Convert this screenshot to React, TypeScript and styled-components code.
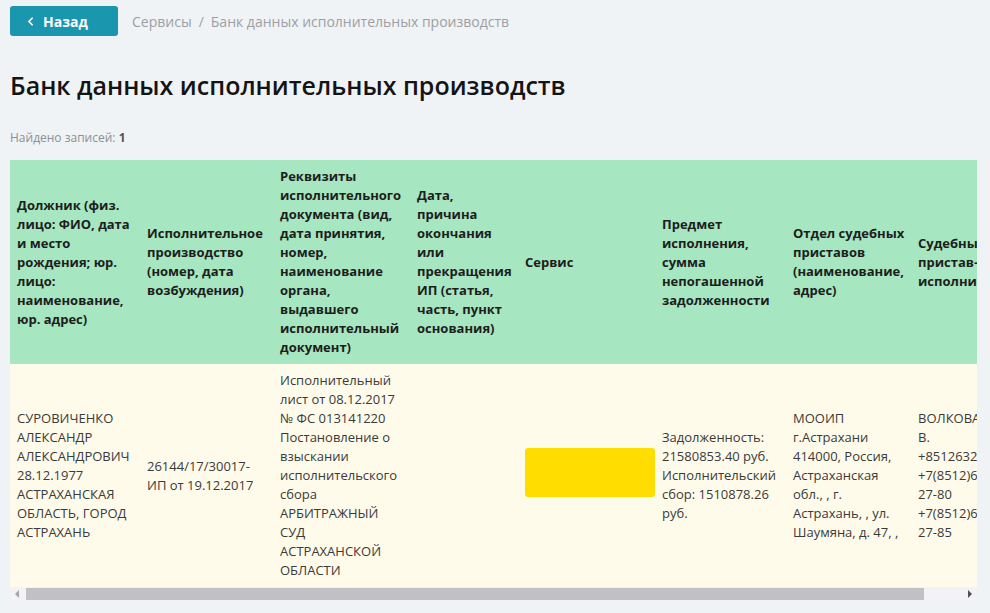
import React from 'react';
import styled, { createGlobalStyle } from 'styled-components';
import { ChevronLeft } from 'lucide-react';

const GlobalStyle = createGlobalStyle`
  html, body {
    margin: 0;
    padding: 0;
    background: #f0f3f6;
    font-family: "Open Sans", "Noto Sans", Arial, sans-serif;
  }
`;

const columns = [
  { width: 130, title: 'Должник (физ. лицо: ФИО, дата и место рождения; юр. лицо: наименование, юр. адрес)' },
  { width: 133, title: 'Исполнительное производство (номер, дата возбуждения)' },
  { width: 137, title: 'Реквизиты исполнительного документа (вид, дата принятия, номер, наименование органа, выдавшего исполнительный документ)' },
  { width: 108, title: 'Дата, причина окончания или прекращения ИП (статья, часть, пункт основания)' },
  { width: 137, title: 'Сервис' },
  { width: 131, title: 'Предмет исполнения, сумма непогашенной задолженности' },
  { width: 125, title: 'Отдел судебных приставов (наименование, адрес)' },
  { width: 108, title: 'Судебный пристав-исполнитель' },
];

const tableWidth = columns.reduce((sum, col) => sum + col.width, 0);
const visibleWidth = 967;

const row = {
  debtor: ['СУРОВИЧЕНКО АЛЕКСАНДР АЛЕКСАНДРОВИЧ', '28.12.1977', 'АСТРАХАНСКАЯ ОБЛАСТЬ, ГОРОД АСТРАХАНЬ'],
  proceeding: ['26144/17/30017-ИП от 19.12.2017'],
  document: [
    'Исполнительный лист от 08.12.2017 № ФС 013141220',
    'Постановление о взыскании исполнительского сбора',
    'АРБИТРАЖНЫЙ СУД АСТРАХАНСКОЙ ОБЛАСТИ',
  ],
  ended: [] as string[],
  subject: ['Задолженность: 21580853.40 руб.', 'Исполнительский сбор: 1510878.26 руб.'],
  department: ['МООИП г.Астрахани', '414000, Россия, Астраханская обл., , г. Астрахань, , ул. Шаумяна, д. 47, ,'],
  bailiff: ['ВОЛКОВА Ю. В.', '+85126322780', '+7(8512)632-27-80', '+7(8512)632-27-85'],
};

const App = () => {
  const cells = [row.debtor, row.proceeding, row.document, row.ended];
  const rest = [row.subject, row.department, row.bailiff];

  return (
    <Page>
      <GlobalStyle />
      <TopBar>
        <BackButton>
          <ChevronLeft size={13} strokeWidth={3.2} />
          Назад
        </BackButton>
        <Breadcrumbs>
          <span>Сервисы</span>
          <Separator>/</Separator>
          <span>Банк данных исполнительных производств</span>
        </Breadcrumbs>
      </TopBar>

      <Title>Банк данных исполнительных производств</Title>

      <Found>
        Найдено записей: <b>1</b>
      </Found>

      <TableWrap>
        <Table style={{ width: tableWidth }}>
          <colgroup>
            {columns.map((col, index) => (
              <col key={index} style={{ width: col.width }} />
            ))}
          </colgroup>
          <thead>
            <tr>
              {columns.map((col, index) => (
                <HeadCell key={index}>{col.title}</HeadCell>
              ))}
            </tr>
          </thead>
          <tbody>
            <tr>
              {cells.map((lines, index) => (
                <BodyCell key={index}>
                  {lines.map((line, i) => (
                    <div key={i}>{line}</div>
                  ))}
                </BodyCell>
              ))}
              <BodyCell>
                <ServiceBadge />
              </BodyCell>
              {rest.map((lines, index) => (
                <BodyCell key={index}>
                  {lines.map((line, i) => (
                    <div key={i}>{line}</div>
                  ))}
                </BodyCell>
              ))}
            </tr>
          </tbody>
        </Table>
      </TableWrap>

      <ScrollBar>
        <ScrollArrow $dir="left" $muted />
        <ScrollTrack>
          <ScrollThumb style={{ width: `${(visibleWidth / tableWidth) * 100}%` }} />
        </ScrollTrack>
        <ScrollArrow $dir="right" />
      </ScrollBar>
    </Page>
  );
};

const Page = styled.div`
  padding: 6px 13px 0 10px;
`;

const TopBar = styled.div`
  display: flex;
  align-items: center;
  gap: 14px;
  height: 30px;
`;

const BackButton = styled.button`
  display: flex;
  align-items: center;
  gap: 6px;
  width: 108px;
  height: 30px;
  padding: 0 0 0 14px;
  border: none;
  border-radius: 3px;
  background: #1a96ae;
  color: #fff;
  font-family: "Open Sans", Arial, sans-serif;
  font-size: 14px;
  font-weight: 700;
  cursor: pointer;
`;

const Breadcrumbs = styled.div`
  display: flex;
  align-items: center;
  font-size: 14px;
  color: #9c9fa3;
`;

const Separator = styled.span`
  margin: 0 7px;
`;

const Title = styled.h1`
  margin: 33px 0 0;
  font-size: 25px;
  line-height: 32px;
  font-weight: 600;
  color: #141414;
`;

const Found = styled.div`
  margin-top: 29px;
  font-size: 12px;
  line-height: 16px;
  color: #8d8f92;

  b {
    color: #555;
    font-weight: 700;
  }
`;

const TableWrap = styled.div`
  margin-top: 14px;
  overflow: hidden;
`;

const Table = styled.table`
  table-layout: fixed;
  border-collapse: collapse;
  font-size: 13px;
  line-height: 19px;
`;

const HeadCell = styled.th`
  padding: 7px 6px 7px 7px;
  background: #a6e6c0;
  color: #1d1d1d;
  font-weight: 700;
  text-align: left;
  vertical-align: middle;
`;

const BodyCell = styled.td`
  padding: 7px 6px 7px 7px;
  background: #fffbea;
  color: #3a3a3a;
  vertical-align: middle;
`;

const ServiceBadge = styled.span`
  display: block;
  width: 130px;
  height: 49px;
  margin-top: -6px;
  border-radius: 3px;
  background: #ffdd00;
`;

const ScrollBar = styled.div`
  display: flex;
  align-items: center;
  height: 14px;
  background: #f3f3f6;
`;

const ScrollArrow = styled.span<{ $dir: 'left' | 'right'; $muted?: boolean }>`
  display: flex;
  align-items: center;
  justify-content: center;
  width: 14px;
  height: 14px;

  &::before {
    content: '';
    width: 0;
    height: 0;
    border-top: 4px solid transparent;
    border-bottom: 4px solid transparent;
    ${(p) =>
      p.$dir === 'left'
        ? `border-right: 4px solid ${p.$muted ? '#a5a5a8' : '#505053'};`
        : `border-left: 4px solid ${p.$muted ? '#a5a5a8' : '#505053'};`}
  }
`;

const ScrollTrack = styled.div`
  flex: 1;
  display: flex;
  height: 12px;
  padding-left: 2px;
`;

const ScrollThumb = styled.div`
  height: 12px;
  background: #c1c0c4;
`;

export default App;
